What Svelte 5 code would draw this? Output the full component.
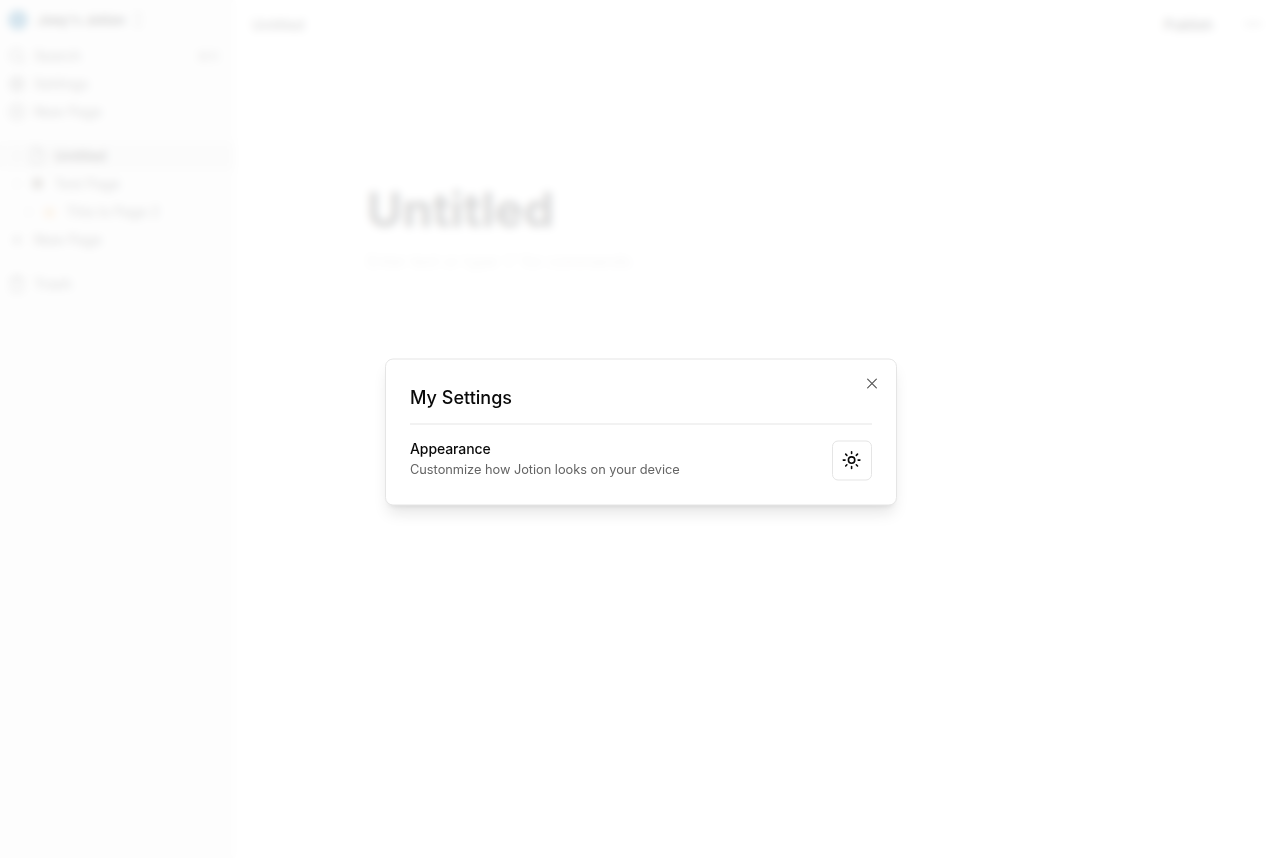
<script>
  const actions = [
    { label: 'Search', icon: 'search', kbd: true },
    { label: 'Settings', icon: 'settings' },
    { label: 'New Page', icon: 'circle' }
  ];
  const pages = [
    { label: 'Untitled', icon: 'file', level: 0, active: true },
    { label: 'Test Page', emoji: 'dark', level: 0 },
    { label: 'This Is Page 2', emoji: 'warm', level: 1 }
  ];
</script>

{#snippet icon(name, size = 18)}
  <svg width={size} height={size} viewBox="0 0 24 24" fill="none" stroke="currentColor" stroke-width="2" stroke-linecap="round" stroke-linejoin="round">
    {#if name === 'search'}
      <circle cx="11" cy="11" r="8" /><path d="m21 21-4.3-4.3" />
    {:else if name === 'settings'}
      <path d="M12.22 2h-.44a2 2 0 0 0-2 2v.18a2 2 0 0 1-1 1.73l-.43.25a2 2 0 0 1-2 0l-.15-.08a2 2 0 0 0-2.73.73l-.22.38a2 2 0 0 0 .73 2.73l.15.1a2 2 0 0 1 1 1.72v.51a2 2 0 0 1-1 1.74l-.15.09a2 2 0 0 0-.73 2.73l.22.38a2 2 0 0 0 2.73.73l.15-.08a2 2 0 0 1 2 0l.43.25a2 2 0 0 1 1 1.73V20a2 2 0 0 0 2 2h.44a2 2 0 0 0 2-2v-.18a2 2 0 0 1 1-1.73l.43-.25a2 2 0 0 1 2 0l.15.08a2 2 0 0 0 2.73-.73l.22-.39a2 2 0 0 0-.73-2.73l-.15-.08a2 2 0 0 1-1-1.74v-.5a2 2 0 0 1 1-1.74l.15-.09a2 2 0 0 0 .73-2.73l-.22-.38a2 2 0 0 0-2.73-.73l-.15.08a2 2 0 0 1-2 0l-.43-.25a2 2 0 0 1-1-1.73V4a2 2 0 0 0-2-2z" /><circle cx="12" cy="12" r="3" />
    {:else if name === 'circle'}
      <circle cx="12" cy="12" r="10" /><path d="M8 12h8M12 8v8" />
    {:else if name === 'file'}
      <path d="M14.5 2H6a2 2 0 0 0-2 2v16a2 2 0 0 0 2 2h12a2 2 0 0 0 2-2V7.5L14.5 2z" /><path d="M14 2v6h6" />
    {:else if name === 'plus'}
      <path d="M5 12h14M12 5v14" />
    {:else if name === 'trash'}
      <path d="M3 6h18M19 6v14a2 2 0 0 1-2 2H7a2 2 0 0 1-2-2V6M8 6V4a2 2 0 0 1 2-2h4a2 2 0 0 1 2 2v2" />
    {:else if name === 'chevron'}
      <path d="m9 18 6-6-6-6" />
    {:else if name === 'updown'}
      <path d="m7 17 5 5 5-5M7 7l5-5 5 5" />
    {:else if name === 'dots'}
      <circle cx="12" cy="12" r="1" /><circle cx="19" cy="12" r="1" /><circle cx="5" cy="12" r="1" />
    {/if}
  </svg>
{/snippet}

<div class="app">
  <aside>
    <div class="user"><span class="avatar"></span><b>Joey's Jotion</b>{@render icon('updown', 16)}</div>
    <nav>
      {#each actions as a}
        <div class="item">{@render icon(a.icon)}<span>{a.label}</span>{#if a.kbd}<kbd>⌘ K</kbd>{/if}</div>
      {/each}
    </nav>
    <nav>
      {#each pages as p}
        <div class="item page" class:active={p.active} style:padding-left="{10 + p.level * 12}px">
          {@render icon('chevron', 14)}
          {#if p.emoji}<i class={p.emoji}></i>{:else}{@render icon(p.icon)}{/if}
          <span>{p.label}</span>
        </div>
      {/each}
      <div class="item">{@render icon('plus')}<span>New Page</span></div>
    </nav>
    <nav><div class="item">{@render icon('trash')}<span>Trash</span></div></nav>
  </aside>
  <main>
    <header><span>Untitled</span><b>Publish</b>{@render icon('dots', 20)}</header>
    <article>
      <h1>Untitled</h1>
      <p>Enter text or type '/' for commands</p>
    </article>
  </main>
</div>

<div class="overlay">
  <div class="dialog" role="dialog" aria-label="My Settings">
    <h2>My Settings</h2>
    <div class="setting">
      <div class="copy">
        <strong>Appearance</strong>
        <span>Custonmize how Jotion looks on your device</span>
      </div>
      <button class="theme" aria-label="Theme">
        <svg width="19.2" height="19.2" viewBox="0 0 15 15" fill="none" stroke="currentColor" stroke-linecap="round">
          <circle cx="7.5" cy="7.5" r="2.5" stroke-width="1.25" />
          <path d="M7.5 1v1.4M7.5 12.6v1.4M1 7.5h1.4M12.6 7.5h1.4M2.87 2.87l.95 .95M11.18 11.18l.95 .95M2.87 12.13l.95-.95M11.18 3.82l.95-.95" stroke-width="1.25" />
        </svg>
      </button>
    </div>
    <button class="close" aria-label="Close">
      <svg width="16" height="16" viewBox="0 0 15 15" fill="none" stroke="currentColor" stroke-width="1.05" stroke-linecap="round">
        <path d="M3.4 3.4l8.2 8.2M11.6 3.4l-8.2 8.2" />
      </svg>
    </button>
  </div>
</div>

<style>
  :global(body) { font-family: Inter, sans-serif; background: #fff; color: #0a0a0a; overflow: hidden; }
  * { box-sizing: border-box; }
  svg { flex: none; display: block; }
  .app { display: flex; height: 858px; }
  aside { width: 235px; background: #f5f5f5; color: #666; font-size: 14px; font-weight: 500; }
  .user { height: 41.5px; display: flex; align-items: center; padding: 0 8px 1.5px; color: #0a0a0a; }
  .user b { font-weight: 560; font-size: 13.6px; margin: 0 7px 0 9px; }
  .user svg { color: #737373; margin-left: -2px; }
  .avatar { width: 20px; height: 20px; border-radius: 50%; background: #2979a9; }
  nav { margin-bottom: 16px; }
  .item { height: 28px; display: flex; align-items: center; padding: 0 12px 0 8px; gap: 8px; }
  .item kbd { margin-left: auto; margin-right: -1px; border-radius: 4px; border: 1px solid #e5e5e5; padding: 1px 5px; font: 500 10px Inter, sans-serif; }
  .page { gap: 6px; }
  .page svg:first-child { color: #a3a3a3; }
  .page svg + svg { margin-left: -2px; margin-right: 2px; }
  .active { background: #ebebeb; color: #0a0a0a; }
  .active svg + svg { color: #737373; }
  .page i { width: 11px; height: 11px; border-radius: 4px; margin: 0 5px 0 2px; }
  .dark { background: #8a8278; }
  .warm { background: linear-gradient(#ece4d8, #eeb060); }
  main { flex: 1; }
  header { height: 48px; display: flex; align-items: center; padding: 0 14px 0 17px; font-size: 14px; font-weight: 500; color: #444; }
  header span { flex: 1; }
  header b { color: #0a0a0a; font-weight: 500; margin-right: 30px; }
  article { padding: 132px 0 0 132px; }
  h1 { margin: 0; font-size: 48px; line-height: 60px; font-weight: 700; color: #3f3f3f; letter-spacing: .25px; }
  p { margin: 9px 0 0; font-size: 16px; line-height: 24px; color: #cfcfcf; }
  .overlay { position: fixed; inset: 0; background: rgba(255, 255, 255, .8); backdrop-filter: blur(4px); display: flex; justify-content: center; align-items: center; padding: 6px 0 0 5px; }
  .dialog { position: relative; flex: none; width: 512px; height: 147px; padding: 24px; border: 1px solid #e5e5e5; border-radius: 8px; background: #fff; box-shadow: 0 10px 15px -3px rgba(0, 0, 0, .1), 0 4px 6px -4px rgba(0, 0, 0, .1); transform: translateY(-.5px); will-change: transform; }
  h2 { margin: 0 0 16px; padding-bottom: 12px; border-bottom: 1px solid #e5e5e5; font-size: 18px; line-height: 28px; font-weight: 540; letter-spacing: .02px; }
  .setting { display: flex; align-items: center; justify-content: space-between; }
  .copy { display: flex; flex-direction: column; gap: 4px; }
  strong { font-size: 14px; line-height: 14px; font-weight: 540; letter-spacing: -.1px; }
  .copy span { font-size: 12.8px; line-height: 20px; color: #646464; letter-spacing: -.025px; }
  button { padding: 0; background: #fff; color: #0a0a0a; border: 0; }
  .theme { width: 40px; height: 40px; border: 1px solid #e5e5e5; border-radius: 6px; display: grid; place-items: center; }
  .close { position: absolute; right: 16px; top: 16px; opacity: .7; }
</style>
